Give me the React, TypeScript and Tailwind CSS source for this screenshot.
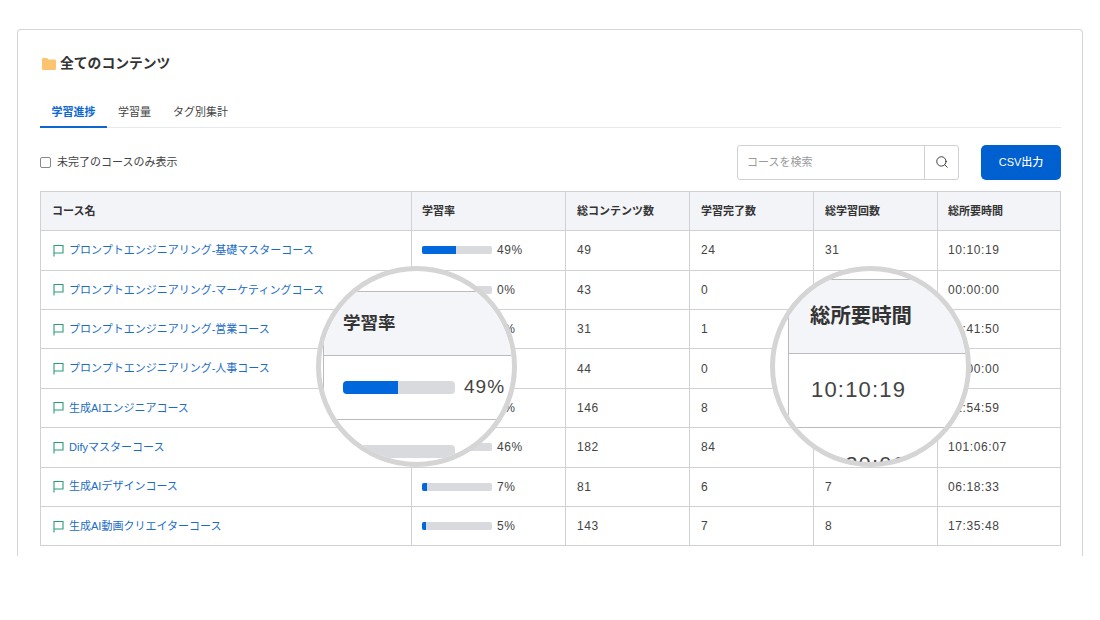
import { Search } from 'lucide-react';

const courses = [
  { name: 'プロンプトエンジニアリング-基礎マスターコース', rate: 49, total: 49, done: 24, count: 31, time: '10:10:19' },
  { name: 'プロンプトエンジニアリング-マーケティングコース', rate: 0, total: 43, done: 0, count: 0, time: '00:00:00' },
  { name: 'プロンプトエンジニアリング-営業コース', rate: 3, total: 31, done: 1, count: 2, time: '00:41:50' },
  { name: 'プロンプトエンジニアリング-人事コース', rate: 0, total: 44, done: 0, count: 0, time: '00:00:00' },
  { name: '生成AIエンジニアコース', rate: 5, total: 146, done: 8, count: 9, time: '01:54:59' },
  { name: 'Difyマスターコース', rate: 46, total: 182, done: 84, count: 96, time: '101:06:07' },
  { name: '生成AIデザインコース', rate: 7, total: 81, done: 6, count: 7, time: '06:18:33' },
  { name: '生成AI動画クリエイターコース', rate: 5, total: 143, done: 7, count: 8, time: '17:35:48' },
];

const headers = ['コース名', '学習率', '総コンテンツ数', '学習完了数', '総学習回数', '総所要時間'];

function FlagIcon() {
  return (
    <svg width="11" height="13" viewBox="0 0 11 13" fill="none" stroke="#2a9d78" strokeWidth="1.1" className="shrink-0">
      <path d="M1 12.5V1.5H10V9H1" />
    </svg>
  );
}

function FolderIcon() {
  return (
    <svg width="14" height="12" viewBox="0 0 14 12" fill="#fcc470" className="ml-[2px]">
      <path d="M0 1.2A1.2 1.2 0 0 1 1.2 0H5L6.5 1.5h6.3A1.2 1.2 0 0 1 14 2.7v8.1a1.2 1.2 0 0 1-1.2 1.2H1.2A1.2 1.2 0 0 1 0 10.8z" />
    </svg>
  );
}

function RateMagnifier() {
  return (
    <div className="absolute left-[316px] top-[266px] h-[201px] w-[201px] overflow-hidden rounded-full border-[5px] border-[#d5d5d5] bg-white">
      <div className="mt-[20px] ml-[2px] w-[200px] border-l border-[#b9bbbe]">
        <div className="flex h-[65px] items-center border-y border-[#b9bbbe] bg-[#f3f5f9] pl-[19px] text-[17.5px] font-bold text-[#333]">
          学習率
        </div>
        <div className="flex h-[64px] items-center gap-[9px] border-b border-[#b9bbbe] pl-[19px]">
          <div className="h-[13px] w-[112px] overflow-hidden rounded-[4px] bg-[#d9dadd]">
            <div className="h-full w-[49%] bg-[#0068dc]" />
          </div>
          <span className="text-[19px] tracking-[1px] text-[#444]">49%</span>
        </div>
        <div className="pt-[25px] pl-[19px]">
          <div className="h-[13px] w-[112px] rounded-[4px] bg-[#d9dadd]" />
        </div>
      </div>
    </div>
  );
}

function TimeMagnifier() {
  return (
    <div className="absolute left-[770px] top-[266px] h-[201px] w-[201px] overflow-hidden rounded-full border-[5px] border-[#d5d5d5] bg-white">
      <div className="mt-[8px] ml-[13px] w-[200px] border-l border-[#b9bbbe]">
        <div className="flex h-[75px] items-center border-y border-[#b9bbbe] bg-[#f3f5f9] pl-[21px] text-[20.4px] font-bold text-[#333]">
          総所要時間
        </div>
        <div className="flex h-[74px] items-center border-b border-[#b9bbbe] pb-[2px] pl-[22px] text-[22px] tracking-[1.2px] text-[#444]">
          10:10:19
        </div>
        <div className="pt-[20px] pl-[22px] text-[22px] tracking-[1.2px] text-[#444]">09:20:06</div>
      </div>
    </div>
  );
}

export default function App() {
  return (
    <div
      className="relative h-[620px] w-[1100px] overflow-hidden bg-white pt-[29px] pl-[17px] text-[11px] text-[#444]"
      style={{ fontFamily: '"Liberation Sans", "Noto Sans CJK JP", sans-serif' }}
    >
      <div className="h-[527px] w-[1066px] rounded-t-[4px] border border-b-0 border-[#d3d5d8] px-[22px] pt-[24px]">
        <div className="flex items-center gap-[4px] text-[13.8px] font-bold text-[#333]">
          <FolderIcon />
          全てのコンテンツ
        </div>

        {/* Tabs */}
        <div className="mt-[21px] flex h-[32px] w-[1021px] border-b border-[#e8e9ec]">
          <div className="h-[32px] w-[67px] border-b-2 border-[#0b66d0] pt-[8px] text-center font-bold text-[#0b66d0]">
            学習進捗
          </div>
          <div className="flex gap-[22px] pt-[8px] pl-[11px]">
            <span>学習量</span>
            <span>タグ別集計</span>
          </div>
        </div>

        {/* Filters */}
        <div className="mt-[17px] flex h-[35px] w-[1021px] items-center">
          <div className="flex items-center gap-[6px]">
            <div className="h-[11px] w-[11px] rounded-[2px] border border-[#888] bg-white" />
            未完了のコースのみ表示
          </div>
          <div className="ml-auto flex h-[35px] w-[222px] rounded-[3px] border border-[#cfd1d5]">
            <div className="flex flex-1 items-center pl-[9px] text-[#9a9a9a]">コースを検索</div>
            <div className="flex w-[34px] items-center justify-center border-l border-[#cfd1d5]">
              <Search size={14} strokeWidth={1.6} color="#333" />
            </div>
          </div>
          <button className="ml-[22px] h-[35px] w-[80px] rounded-[5px] bg-[#0060d0] font-medium text-white">
            CSV出力
          </button>
        </div>

        {/* Course table */}
        <table className="mt-[11px] w-[1020px] table-fixed border-collapse border border-[#cfd1d5]">
          <colgroup>
            <col className="w-[371px]" />
            <col className="w-[154px]" />
            <col className="w-[124px]" />
            <col className="w-[124px]" />
            <col className="w-[124px]" />
            <col className="w-[123px]" />
          </colgroup>
          <thead>
            <tr className="h-[39.5px] bg-[#f3f4f8]">
              {headers.map((h, i) => (
                <th
                  key={h}
                  className={
                    i === 1 || i === 5
                      ? 'border border-[#cfd1d5] pl-[10px] text-left font-bold text-[#333]'
                      : 'border border-[#cfd1d5] pl-[11px] text-left font-bold text-[#333]'
                  }
                >
                  {h}
                </th>
              ))}
            </tr>
          </thead>
          <tbody>
            {courses.map((c) => (
              <tr key={c.name} className="h-[39.4px]">
                <td className="border border-[#cfd1d5] pl-[12px]">
                  <div className="flex items-center gap-[5px] text-[#1a6cc6]">
                    <FlagIcon />
                    {c.name}
                  </div>
                </td>
                <td className="border border-[#cfd1d5] pl-[10px]">
                  <div className="flex items-center gap-[5px] text-[12px] tracking-[0.6px]">
                    <div className="h-[8px] w-[70px] overflow-hidden rounded-[2px] bg-[#d9dadd]">
                      <div className="h-full bg-[#0068dc]" style={{ width: `${c.rate}%` }} />
                    </div>
                    {c.rate}%
                  </div>
                </td>
                <td className="border border-[#cfd1d5] pl-[11px] text-[12px] tracking-[0.6px]">{c.total}</td>
                <td className="border border-[#cfd1d5] pl-[11px] text-[12px] tracking-[0.6px]">{c.done}</td>
                <td className="border border-[#cfd1d5] pl-[11px] text-[12px] tracking-[0.6px]">{c.count}</td>
                <td className="border border-[#cfd1d5] pl-[10px] text-[12px] tracking-[0.6px]">{c.time}</td>
              </tr>
            ))}
          </tbody>
        </table>
      </div>

      <RateMagnifier />
      <TimeMagnifier />
    </div>
  );
}
